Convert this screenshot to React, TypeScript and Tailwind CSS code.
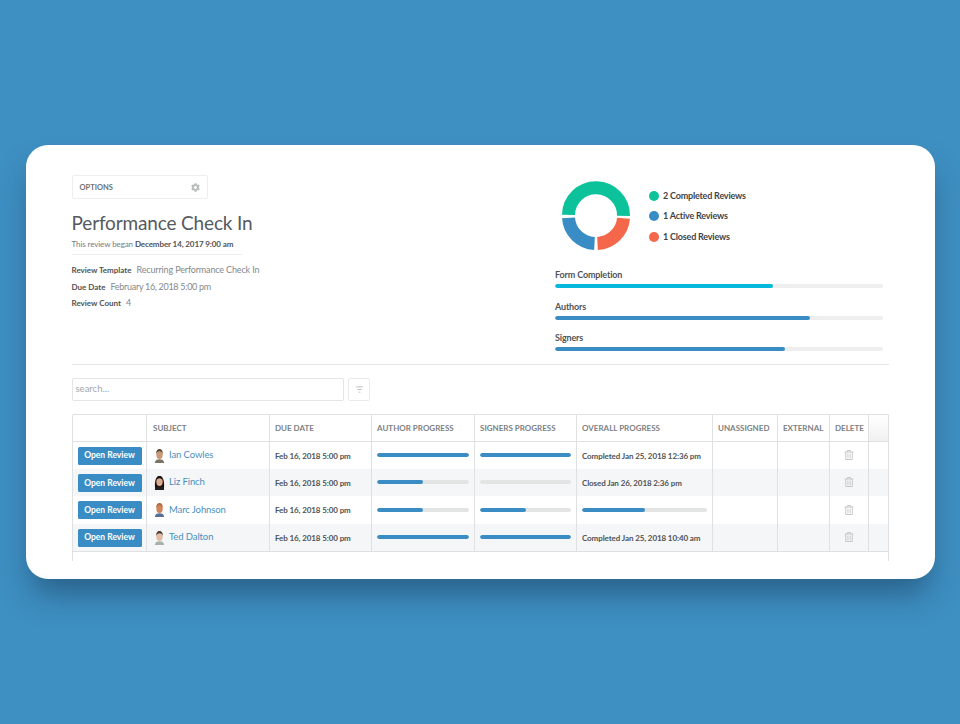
import { FaCog, FaRegTrashAlt } from "react-icons/fa";

type Row = {
  name: string;
  face: string;
  hair: string;
  shirt: string;
  longHair?: boolean;
  author: number;
  signers: number;
  overall: string | number;
};

const rows: Row[] = [
  { name: "Ian Cowles", face: "#c99a78", hair: "#5b4a3a", shirt: "#7d7468", author: 100, signers: 100, overall: "Completed Jan 25, 2018 12:36 pm" },
  { name: "Liz Finch", face: "#d9ab90", hair: "#17120f", shirt: "#26201d", longHair: true, author: 50, signers: 0, overall: "Closed Jan 26, 2018 2:36 pm" },
  { name: "Marc Johnson", face: "#cf845a", hair: "#b8693f", shirt: "#5a6f96", author: 50, signers: 50, overall: 50 },
  { name: "Ted Dalton", face: "#e2bda5", hair: "#4a3b32", shirt: "#a9b2a8", author: 100, signers: 100, overall: "Completed Jan 25, 2018 10:40 am" },
];

const legend = [
  { color: "bg-[#0cc29b]", label: "2 Completed Reviews" },
  { color: "bg-[#3a8dc4]", label: "1 Active Reviews" },
  { color: "bg-[#f5674a]", label: "1 Closed Reviews" },
];

const summary = [
  { label: "Form Completion", value: 66.5, color: "bg-[#06b8dc]" },
  { label: "Authors", value: 77.7, color: "bg-[#3a8dc4]" },
  { label: "Signers", value: 70, color: "bg-[#3a8dc4]" },
];

function Bar({ value, color = "bg-[#3a8dc4]", track = "bg-[#e3e4e4]" }: { value: number; color?: string; track?: string }) {
  return (
    <div className={"h-[4px] w-full overflow-hidden rounded-full " + track}>
      <div className={"h-full rounded-full " + color} style={{ width: value + "%" }} />
    </div>
  );
}

function Avatar({ face, hair, shirt, longHair }: { face: string; hair: string; shirt: string; longHair?: boolean }) {
  return (
    <svg viewBox="0 0 16 16" className="h-[15px] w-[15px] shrink-0">
      {longHair && <path d="M3.5 15C2.5 10 3 1 8 1s5.500 9 4.500 14z" fill={hair} />}
      <path d="M3 16c.3-3 2.200-4 5-4s4.700 1 5 4z" fill={shirt} />
      <ellipse cx="8" cy="6.800" rx="3.400" ry="4.800" fill={face} />
      <path d="M4.500 6.500C4.300 2.500 6 1 8 1s3.800 1.500 3.500 5.500c-.6-2-1.500-3-3.500-3s-2.900 1-3.500 3z" fill={hair} />
    </svg>
  );
}

function Donut() {
  return (
    <svg viewBox="0 0 70 70" className="h-[70px] w-[70px] shrink-0" fill="none" strokeWidth="13">
      <path d="M7.500 33.800A27.500 27.500 0 0 1 62.500 34.800" stroke="#0cc29b" />
      <path d="M33.500 62.500A27.500 27.500 0 0 1 7.500 36.800" stroke="#3a8dc4" />
      <path d="M62.500 37.300A27.500 27.500 0 0 1 36.500 62.500" stroke="#f5674a" />
    </svg>
  );
}

export default function App() {
  return (
    <div className="h-[724px] w-[960px] overflow-hidden bg-[#3e8fc2] pt-[145px] pl-[26px] font-['Lato','Liberation_Sans',sans-serif]">
      <div className="h-[434px] w-[909px] rounded-[22px] bg-white pt-[30px] pr-[46px] pl-[45.5px] shadow-[0_20px_30px_-6px_rgba(20,50,80,0.5)]">
        <div className="flex h-[190px] w-[817.5px] border-b border-[#e6e6e6]">
          <div className="w-[483.5px]">
            <div className="flex h-[24px] w-[136px] items-center justify-between rounded-[2px] border border-[#eeeeee] pt-[1px] pr-[7px] pl-[7px]">
              <span className="text-[7.5px] font-bold text-[#6f7274]">OPTIONS</span>
              <FaCog className="h-[9px] w-[9px] text-[#b9bbbc]" />
            </div>
            <h1 className="mt-[11px] text-[19px] leading-[26px] tracking-[-0.15px] text-[#555a5e]">Performance Check In</h1>
            <p className="mt-[2px] w-[170px] border-b border-[#eeeeee] pb-[4px] text-[8px] leading-[12px] tracking-[-0.1px] whitespace-nowrap text-[#777b7e]">
              This review began <span className="font-bold text-[#4f5356]">December 14, 2017 9:00 am</span>
            </p>
            <div className="mt-[9px] flex flex-col gap-[4.5px] text-[9px] leading-[12px] tracking-[-0.15px] text-[#85898c]">
              <div className="flex items-center gap-[5px]">
                <span className="text-[8px] font-bold tracking-normal text-[#4f5356]">Review Template</span>
                <span>Recurring Performance Check In</span>
              </div>
              <div className="flex items-center gap-[5px]">
                <span className="text-[8px] font-bold tracking-normal text-[#4f5356]">Due Date</span>
                <span className="tracking-[-0.3px]">February 16, 2018 5:00 pm</span>
              </div>
              <div className="flex items-center gap-[5px]">
                <span className="text-[8px] font-bold tracking-normal text-[#4f5356]">Review Count</span>
                <span>4</span>
              </div>
            </div>
          </div>
          <div className="w-[328px]">
            <div className="mt-[6px] ml-[6px] flex items-start gap-[18px]">
              <Donut />
              <div className="flex flex-col gap-[9.5px] pt-[9px]">
                {legend.map((l) => (
                  <div key={l.label} className="flex h-[11px] items-center gap-[4px]">
                    <span className={"h-[10px] w-[10px] rounded-full " + l.color} />
                    <span className="text-[9px] font-bold tracking-[-0.2px] text-[#3f4346]">{l.label}</span>
                  </div>
                ))}
              </div>
            </div>
            <div className="mt-[19px] flex flex-col gap-[13.5px]">
              {summary.map((s) => (
                <div key={s.label}>
                  <div className="mb-[4px] text-[9px] leading-[10px] font-bold tracking-[-0.15px] text-[#4f5356]">{s.label}</div>
                  <Bar value={s.value} color={s.color} track="bg-[#eeeeee]" />
                </div>
              ))}
            </div>
          </div>
        </div>

        <div className="mt-[13px] flex gap-[4px]">
          <div className="flex h-[23px] w-[272.5px] items-center rounded-[2px] border border-[#e4e4e4] px-[3px] text-[9.5px] text-[#a4a7a9]">search...</div>
          <div className="flex h-[23px] w-[22px] items-center justify-center rounded-[2px] border border-[#eaeaea]">
            <svg viewBox="0 0 10 8" className="h-[7px] w-[9px]" fill="none" stroke="#b5b7b9" strokeWidth="1">
              <path d="M1 1h8M2.500 4h5M4 7h2" />
            </svg>
          </div>
        </div>

        <div className="mt-[13px] h-[147px] w-[817.5px] rounded-t-[2px] border-x border-t border-[#dfe0e1]">
          <table className="w-full table-fixed border-collapse text-left">
            <colgroup>
              <col className="w-[74px]" />
              <col className="w-[123px]" />
              <col className="w-[102px]" />
              <col className="w-[103px]" />
              <col className="w-[102px]" />
              <col className="w-[136px]" />
              <col className="w-[65px]" />
              <col className="w-[52px]" />
              <col className="w-[39px]" />
              <col />
            </colgroup>
            <thead>
              <tr className="h-[26px] border-b border-[#dfe0e1] text-[8px] font-bold text-[#7d8184]">
                <th className="border-r border-[#dfe0e1]" />
                <th className="border-r border-[#dfe0e1] pt-[1px] pl-[6px] font-bold">SUBJECT</th>
                <th className="border-r border-[#dfe0e1] pt-[1px] pl-[5px] font-bold">DUE DATE</th>
                <th className="border-r border-[#dfe0e1] pt-[1px] pl-[5px] font-bold">AUTHOR PROGRESS</th>
                <th className="border-r border-[#dfe0e1] pt-[1px] pl-[5px] font-bold">SIGNERS PROGRESS</th>
                <th className="border-r border-[#dfe0e1] pt-[1px] pl-[5px] font-bold">OVERALL PROGRESS</th>
                <th className="border-r border-[#dfe0e1] pt-[1px] pl-[5px] font-bold">UNASSIGNED</th>
                <th className="border-r border-[#dfe0e1] pt-[1px] pl-[5px] font-bold">EXTERNAL</th>
                <th className="border-r border-[#dfe0e1] pt-[1px] pl-[5px] font-bold">DELETE</th>
                <th className="bg-gradient-to-b from-white to-[#f0f0f0]" />
              </tr>
            </thead>
            <tbody>
              {rows.map((r, i) => (
                <tr key={r.name} className={"h-[27.6px] border-[#dfe0e1] " + (i % 2 === 1 ? "bg-[#f5f6f8]" : "bg-white") + (i === 3 ? " border-b" : "")}>
                  <td className="border-r border-[#dfe0e1] pt-[1px] pl-[5px]">
                    <div className="flex h-[18px] w-[64px] items-center justify-center rounded-[1.5px] bg-[#3a8dc4] text-[8.5px] font-bold text-white">Open Review</div>
                  </td>
                  <td className="border-r border-[#dfe0e1] pl-[5px]">
                    <div className="flex items-center gap-[2px]">
                      <Avatar face={r.face} hair={r.hair} shirt={r.shirt} longHair={r.longHair} />
                      <span className="text-[9.5px] tracking-[-0.1px] text-[#4a8fc0]">{r.name}</span>
                    </div>
                  </td>
                  <td className="border-r border-[#dfe0e1] pt-[1px] pl-[5px] text-[8px] font-bold tracking-[-0.1px] text-[#4f5356]">Feb 16, 2018 5:00 pm</td>
                  <td className="border-r border-[#dfe0e1] px-[5px]"><Bar value={r.author} /></td>
                  <td className="border-r border-[#dfe0e1] px-[5px]"><Bar value={r.signers} /></td>
                  {typeof r.overall === "number" ? (
                    <td className="border-r border-[#dfe0e1] px-[5px]"><Bar value={r.overall} /></td>
                  ) : (
                    <td className="border-r border-[#dfe0e1] px-[5px] pt-[1px] text-[8px] font-bold tracking-[-0.1px] whitespace-nowrap text-[#4f5356]">{r.overall}</td>
                  )}
                  <td className="border-r border-[#dfe0e1]" />
                  <td className="border-r border-[#dfe0e1]" />
                  <td className="border-r border-[#dfe0e1]">
                    <FaRegTrashAlt className="mx-auto h-[10px] w-[10px] text-[#c4c6c7]" />
                  </td>
                  <td />
                </tr>
              ))}
            </tbody>
          </table>
        </div>
      </div>
    </div>
  );
}
